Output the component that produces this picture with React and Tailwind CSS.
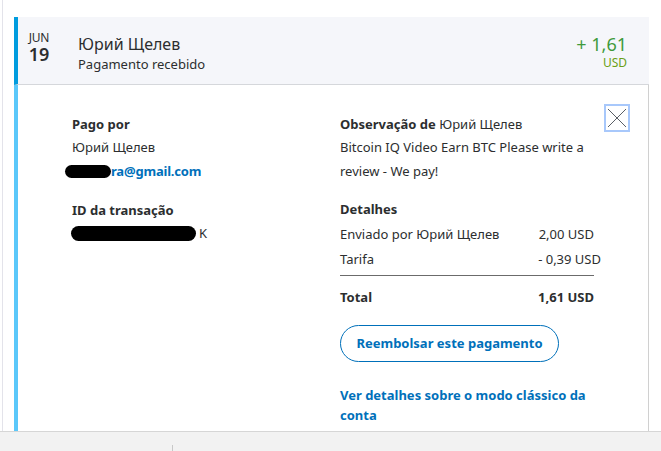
import React from "react";

const F = { fontFamily: '"Noto Sans", "Open Sans", sans-serif' };

function Blob({ w, h }) {
  return <span className="inline-block bg-black rounded-full align-middle" style={{ width: w, height: h }} />;
}

export default function App() {
  return (
    <div className="w-[661px] h-[451px] bg-white overflow-hidden flex flex-col text-[#2c2e2f]" style={F}>
      <div className="h-[431px] ml-[2px] border-l border-[#e3e3ea] pt-[17px] pl-[11px] pr-[12px] flex flex-col">
        {/* header */}
        <div className="h-[68px] bg-[#f5f6fa] border-l-4 border-[#009cde] border-b border-b-[#d5d7db] flex items-start pt-[14px] pl-[9px] pr-[22px]">
          <div className="w-[24px] flex flex-col items-center">
            <span className="text-[12px] leading-[14px] tracking-[-0.3px]">JUN</span>
            <span className="text-[18px] leading-[18px] font-semibold">19</span>
          </div>
          <div className="ml-[27px] mt-[3px] flex flex-col">
            <span className="text-[16px] leading-[20px]">Юрий Щелев</span>
            <span className="text-[13px] leading-[20px]">Pagamento recebido</span>
          </div>
          <div className="ml-auto mt-[3px] flex flex-col items-end">
            <span className="text-[18px] leading-[20px] text-[#3f9a3c]">+ 1,61</span>
            <span className="text-[12px] leading-[16px] text-[#6a9f16] mt-[1px]">USD</span>
          </div>
        </div>
        {/* body */}
        <div className="flex-1 border-l-4 border-[#5bc8fa] border-r border-r-[#d0d0d0] relative flex pt-[28px] pl-[54px]">
          <div className="w-[268px] flex flex-col text-[13px]">
            <span className="font-bold leading-[22px]">Pago por</span>
            <span className="leading-[24px]">Юрий Щелев</span>
            <span className="leading-[24px] font-bold text-[#0070ba] -ml-[7px] flex items-center">
              <Blob w={46} h={13} />
              <span className="tracking-[-0.2px]">ra@gmail.com</span>
            </span>
            <span className="font-bold leading-[22px] mt-[16px]">ID da transação</span>
            <span className="leading-[24px] -ml-[1px] flex items-center">
              <Blob w={125} h={15} />
              <span className="ml-[3px]">K</span>
            </span>
          </div>
          <div className="w-[262px] flex flex-col text-[13px]">
            <span className="leading-[22px]"><b>Observação de</b> Юрий Щелев</span>
            <span className="leading-[24px]">Bitcoin IQ Video Earn BTC Please write a review - We pay!</span>
            <span className="font-bold leading-[22px] mt-[15px]">Detalhes</span>
            <div className="w-[254px] flex flex-col mt-[2px]">
              <div className="flex justify-between leading-[25px]"><span>Enviado por Юрий Щелев</span><span>2,00 USD</span></div>
              <div className="flex justify-between leading-[25px] -mr-[7px]"><span>Tarifa</span><span>- 0,39 USD</span></div>
              <div className="h-px bg-[#6b6b6b] mt-[3px]" />
              <div className="flex justify-between leading-[22px] font-bold mt-[10px]"><span>Total</span><span>1,61 USD</span></div>
            </div>
            <button className="mt-[17px] w-[219px] h-[37px] rounded-full border border-[#0070ba] text-[#0070ba] font-bold text-[13px]">Reembolsar este pagamento</button>
            <span className="mt-[23px] font-bold text-[#0070ba] leading-[20px] w-[250px]">Ver detalhes sobre o modo clássico da conta</span>
          </div>
          <div className="absolute left-[586px] top-[19px] w-[26px] h-[28px] border-2 border-[#a8c8fb] flex items-center justify-center">
            <svg width="20" height="20" viewBox="0 0 20 20"><path d="M1 1L19 19M19 1L1 19" stroke="#5a5f66" strokeWidth="1" fill="none" /></svg>
          </div>
        </div>
      </div>
      <div className="flex-1 bg-[#f2f2f2] border-t border-[#d6d6d6] relative">
        <div className="absolute left-[172px] top-[13px] w-px h-[10px] bg-[#c8c8c8]" />
      </div>
    </div>
  );
}
